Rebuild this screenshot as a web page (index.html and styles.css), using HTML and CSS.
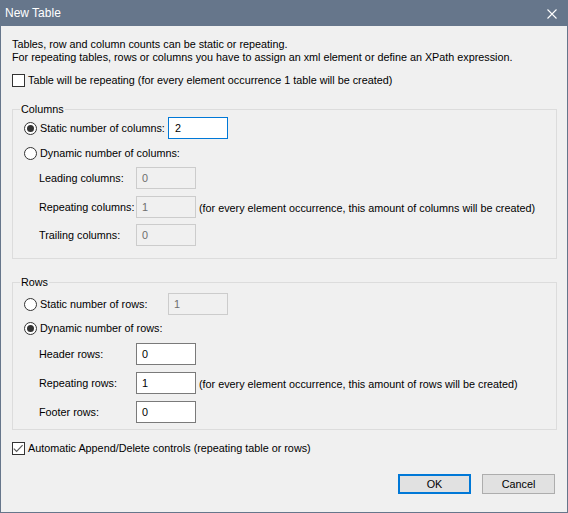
FILE: index.html
```html
<!DOCTYPE html>
<html>
<head>
<meta charset="utf-8">
<title>New Table</title>
<link rel="stylesheet" href="styles.css">
</head>
<body>
<div class="window">
  <div class="titlebar">
    <span class="title">New Table</span>
    <svg class="close" width="10" height="10" viewBox="0 0 10 10"><path d="M0.5 0.5 L9.5 9.5 M9.5 0.5 L0.5 9.5" stroke="#ffffff" stroke-width="1.1" fill="none"/></svg>
  </div>
  <div class="body">
    <p class="desc">Tables, row and column counts can be static or repeating.<br>For repeating tables, rows or columns you have to assign an xml element or define an XPath expression.</p>
    <div class="check-row top-check">
      <span class="checkbox"></span>
      <span class="check-label">Table will be repeating (for every element occurrence 1 table will be created)</span>
    </div>

    <fieldset class="group group-columns">
      <legend>Columns</legend>
      <div class="radio-row static-row">
        <span class="radio on"></span>
        <span class="radio-label">Static number of columns:</span>
        <span class="field focus">2</span>
      </div>
      <div class="radio-row dyn-row">
        <span class="radio"></span>
        <span class="radio-label">Dynamic number of columns:</span>
      </div>
      <div class="sub-row first-sub">
        <span class="sub-label">Leading columns:</span>
        <span class="field disabled">0</span>
      </div>
      <div class="sub-row">
        <span class="sub-label">Repeating columns:</span>
        <span class="field disabled">1</span>
        <span class="note">(for every element occurrence, this amount of columns will be created)</span>
      </div>
      <div class="sub-row last-sub">
        <span class="sub-label">Trailing columns:</span>
        <span class="field disabled">0</span>
      </div>
    </fieldset>

    <fieldset class="group group-rows">
      <legend>Rows</legend>
      <div class="radio-row static-row rows-static">
        <span class="radio"></span>
        <span class="radio-label">Static number of rows:</span>
        <span class="field disabled">1</span>
      </div>
      <div class="radio-row dyn-row rows-dyn">
        <span class="radio on"></span>
        <span class="radio-label">Dynamic number of rows:</span>
      </div>
      <div class="sub-row rows-first">
        <span class="sub-label">Header rows:</span>
        <span class="field">0</span>
      </div>
      <div class="sub-row">
        <span class="sub-label">Repeating rows:</span>
        <span class="field">1</span>
        <span class="note">(for every element occurrence, this amount of rows will be created)</span>
      </div>
      <div class="sub-row">
        <span class="sub-label">Footer rows:</span>
        <span class="field">0</span>
      </div>
    </fieldset>

    <div class="check-row bottom-check">
      <span class="checkbox"><svg width="11" height="11" viewBox="0 0 11 11"><polyline points="0.8,5.6 3.6,8.4 9.6,2.2" fill="none" stroke="#5a5a5a" stroke-width="1.2"/></svg></span>
      <span class="check-label">Automatic Append/Delete controls (repeating table or rows)</span>
    </div>

    <div class="buttons">
      <span class="btn default">OK</span>
      <span class="btn">Cancel</span>
    </div>
  </div>
</div>
</body>
</html>
```

FILE: styles.css
```css
html, body {
  margin: 0;
  padding: 0;
  background: #f0f0f0;
}

.window {
  width: 568px;
  height: 513px;
  display: flex;
  flex-direction: column;
  font-family: "Liberation Sans", Arial, sans-serif;
  font-size: 10.8px;
  line-height: 13px;
  color: #000;
  white-space: nowrap;
}

.titlebar {
  height: 26px;
  flex: none;
  background: #66768b;
  display: flex;
  align-items: center;
  padding-left: 5px;
}

.title {
  color: #ffffff;
  font-size: 12px;
  line-height: 14px;
}

.close {
  margin-left: auto;
  margin-right: 11px;
  margin-top: 1px;
}

.body {
  flex: 1;
  background: #f0f0f0;
  border: 1px solid #66768b;
  border-top: 0;
  padding: 12px 10px 0 11px;
  display: flex;
  flex-direction: column;
}

.desc {
  margin: 0;
}

.check-row {
  display: flex;
  align-items: center;
  height: 13px;
}

.top-check {
  margin-top: 10px;
}

.checkbox {
  width: 13px;
  height: 13px;
  box-sizing: border-box;
  border: 1px solid #333333;
  background: #ffffff;
  flex: none;
  display: flex;
}

.check-label {
  margin-left: 3px;
}

.group {
  margin: 0;
  border: 1px solid #dcdcdc;
  padding: 0 0 12px 7px;
  min-width: 0;
}

.group legend {
  padding: 0 1px;
  line-height: 13px;
}

.group-columns {
  margin-top: 16px;
}

.group-rows {
  margin-top: 17px;
  padding-bottom: 6px;
}

.radio-row {
  display: flex;
  align-items: center;
  margin-left: 4px;
}

.static-row {
  height: 22px;
  margin-top: 1px;
}

.rows-static {
  margin-top: 4px;
}

.dyn-row {
  height: 14px;
  margin-top: 7px;
}

.rows-dyn {
  margin-top: 6px;
}

.radio {
  width: 13px;
  height: 13px;
  box-sizing: border-box;
  border: 1px solid #333333;
  border-radius: 50%;
  background: #ffffff;
  flex: none;
  display: flex;
}

.radio.on::after {
  content: "";
  width: 7px;
  height: 7px;
  border-radius: 50%;
  background: #333333;
  margin: auto;
}

.radio-label {
  margin-left: 3px;
  width: 128px;
  flex: none;
}

.sub-row {
  display: flex;
  align-items: center;
  height: 22px;
  margin-left: 19px;
  margin-top: 7px;
}

.first-sub {
  margin-top: 7px;
}

.last-sub {
  margin-top: 6px;
}

.rows-first {
  margin-top: 8px;
}

.sub-label {
  width: 97px;
  flex: none;
}

.field {
  width: 60px;
  height: 22px;
  box-sizing: border-box;
  border: 1px solid #7a7a7a;
  background: #ffffff;
  padding-left: 5px;
  display: flex;
  align-items: center;
  flex: none;
}

.field.focus {
  border-color: #0078d7;
  padding-left: 6px;
}

.field.disabled {
  border-color: #cccccc;
  background: #f0f0f0;
  color: #6d6d6d;
}

.note {
  margin-left: 3px;
  padding-top: 2px;
}

.bottom-check {
  margin-top: 12px;
}

.buttons {
  display: flex;
  justify-content: flex-end;
  gap: 11px;
  margin-top: 19px;
  margin-right: 2px;
}

.btn {
  width: 73px;
  height: 20px;
  box-sizing: border-box;
  border: 1px solid #adadad;
  background: #e1e1e1;
  display: flex;
  align-items: center;
  justify-content: center;
}

.btn.default {
  border: 2px solid #0078d7;
}
```
